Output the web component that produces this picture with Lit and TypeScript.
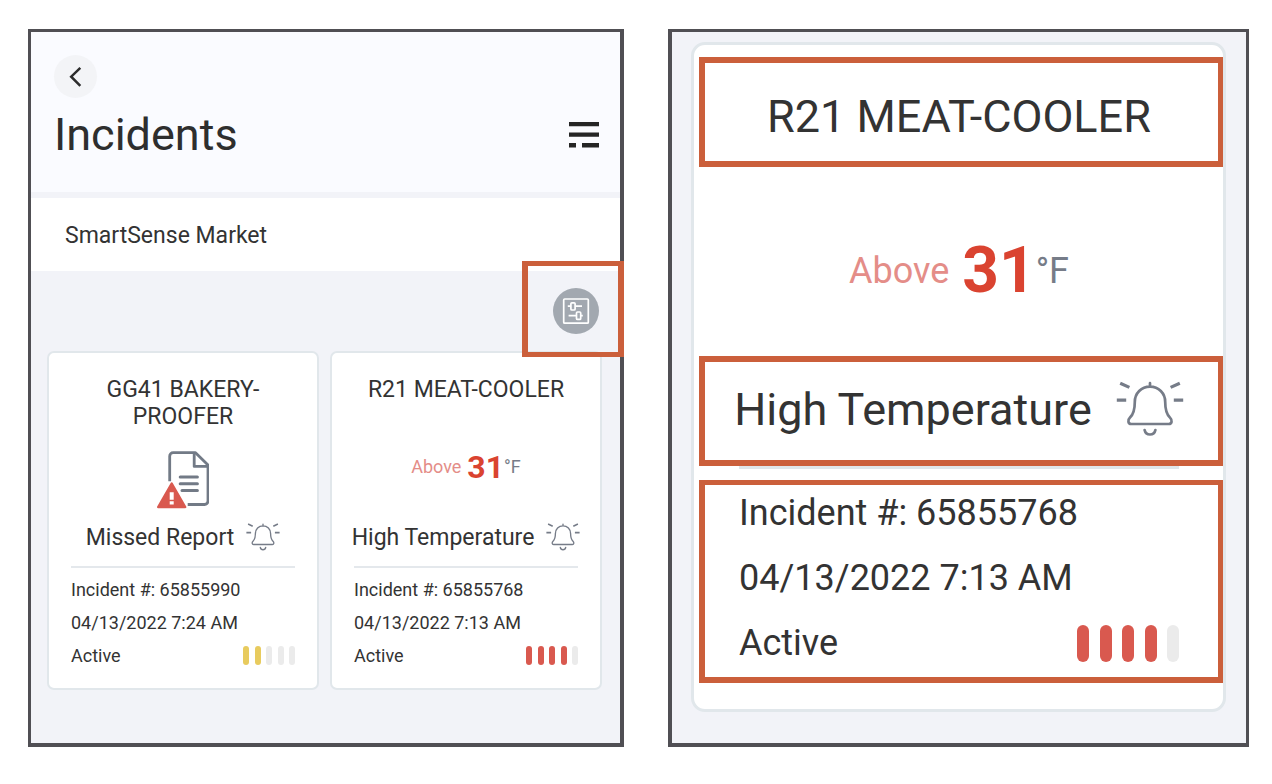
import { LitElement, html, css } from "lit";
import { customElement, property } from "lit/decorators.js";

interface Incident {
  title: string;
  kind: string;
  number: string;
  time: string;
  status: string;
  level: number;
  tone: "red" | "yellow";
  value?: string;
}

const bakery: Incident = {
  title: "GG41 BAKERY-PROOFER",
  kind: "Missed Report",
  number: "65855990",
  time: "04/13/2022 7:24 AM",
  status: "Active",
  level: 2,
  tone: "yellow",
};

const cooler: Incident = {
  title: "R21 MEAT-COOLER",
  kind: "High Temperature",
  number: "65855768",
  time: "04/13/2022 7:13 AM",
  status: "Active",
  level: 4,
  tone: "red",
  value: "31",
};

const bellIcon = html`<svg class="bell" viewBox="0 0 68 56" aria-hidden="true">
  <g fill="none" stroke="#767c88" stroke-width="2.7" stroke-linecap="round" stroke-linejoin="round">
    <path d="M34 2.2v3.2M34 5.6c-8.6 0-15.2 6.6-15.2 15.4 0 8.200-1.200 12.200-4.800 15.600-2.600 2.500-2 6.400 1.200 6.400h37.600c3.200 0 3.800-3.900 1.200-6.400-3.600-3.400-4.800-7.400-4.800-15.600 0-8.800-6.600-15.400-15.200-15.400z"/>
    <path d="M28.600 49c.6 2.900 2.700 4.500 5.400 4.500s4.800-1.600 5.400-4.500"/>
  </g>
  <g fill="none" stroke="#767c88" stroke-width="3.200">
    <path d="M.8 19.200h9.400M57.800 19.200h9.400M4.200 2.200l9.200 4.200M63.800 2.200l-9.200 4.200"/>
  </g>
</svg>`;

const reportIcon = html`<svg class="report" viewBox="0 0 52 58" role="img" aria-label="Missed report">
  <g fill="none" stroke="#727a86" stroke-width="2.800" stroke-linejoin="round">
    <path d="M12.700 30.300V5.200c0-2 1.500-3.500 3.500-3.500h22.300l12.500 12.300v36c0 2-1.500 3.500-3.500 3.500H30.700"/>
    <path d="M37.200 1.700v13.700h13.800"/>
    <path stroke-linecap="round" stroke-width="3" d="M23.200 25.900h17.200M23.200 32.700h17.200M25 39.400h15.400"/>
  </g>
  <path d="M14.700 32.600L28.200 56H1.200z" fill="#d9594f" stroke="#d9594f" stroke-width="2.400" stroke-linejoin="round"/>
  <path d="M12.700 41.300h4v7.400h-4zM12.700 50.300h4v3.200h-4z" fill="#fff"/>
</svg>`;

@customElement("incident-card")
export class IncidentCard extends LitElement {
  @property({ attribute: false }) incident!: Incident;
  @property({ type: Boolean, reflect: true }) large = false;

  static styles = css`
    :host {
      display: flex;
      flex-direction: column;
      box-sizing: border-box;
      min-width: 0;
      padding: 23px 22px 16px;
      border: 2px solid #e1e7eb;
      border-radius: 7px;
      background: #fff;
      color: #333;
      --title: 23px;
      --title-line: 27px;
      --detail: 18px;
      --detail-line: 33px;
      --value: 32px;
    }
    :host([large]) {
      padding: 45px 44px 33px 45px;
      border-width: 3px;
      border-radius: 14px;
      --title: 45px;
      --title-line: 54px;
      --detail: 36px;
      --detail-line: 65px;
      --value: 64px;
    }
    .title, .kind, .facts { position: relative; }
    .title {
      margin: 0;
      font-size: var(--title);
      font-weight: 400;
      line-height: var(--title-line);
      text-align: center;
    }
    .body {
      flex: 1;
      display: flex;
      align-items: center;
      justify-content: center;
      box-sizing: border-box;
      min-height: 90px;
      padding-top: 10px;
    }
    :host([large]) .body { min-height: 231px; padding-top: 22px; }
    .reading {
      display: flex;
      align-items: center;
      margin: 0;
      font-size: var(--detail);
      line-height: 1;
    }
    .above { margin-right: 6px; color: #e48d88; }
    :host([large]) .above { margin-right: 13px; }
    .value { color: #da4330; font-size: var(--value); font-weight: 700; }
    .unit { color: #767c88; }
    .report { width: 52px; height: 58px; }
    .kind {
      display: flex;
      align-items: center;
      justify-content: center;
      gap: 12px;
      height: 34px;
      font-size: var(--title);
      white-space: nowrap;
    }
    :host([large]) .kind { gap: 24px; height: 68px; }
    .bell { flex: none; width: 34px; height: 28px; }
    :host([large]) .bell { width: 68px; height: 56px; }
    .rule {
      width: 100%;
      height: 2px;
      margin: 12px 0 5px;
      border: 0;
      background: #e4e8ec;
    }
    :host([large]) .rule { height: 3px; margin: 23px 0 12px; background: #dfe6ea; }
    .facts { font-size: var(--detail); line-height: var(--detail-line); }
    .facts p { margin: 0; }
    .facts .status { display: flex; align-items: center; justify-content: space-between; }
    .meter { display: flex; justify-content: space-between; width: 52px; height: 19px; }
    .bar { width: 6px; border-radius: 3px; background: #ebebeb; }
    :host([large]) .meter { width: 102px; height: 37px; }
    :host([large]) .bar { width: 12px; border-radius: 6px; }
    .bar.red { background: #d9594f; }
    .bar.yellow { background: #e8cb5e; }
    :host([large]) .title::after,
    :host([large]) .kind::after,
    :host([large]) .facts::after {
      content: "";
      position: absolute;
      inset: -33px -44px -23px -40px;
      border: 6px solid #cb5f3b;
      border-right-width: 5px;
      pointer-events: none;
    }
    :host([large]) .kind::after { top: -19px; }
    :host([large]) .facts::after { top: -1px; bottom: -7px; border-top-width: 5px; }
  `;

  render() {
    const i = this.incident;
    return html`
      <h2 class="title">${i.title}</h2>
      <div class="body">
        ${i.value
          ? html`<p class="reading">
              <span class="above">Above</span><span class="value">${i.value}</span><span class="unit">°F</span>
            </p>`
          : reportIcon}
      </div>
      <div class="kind"><span>${i.kind}</span>${bellIcon}</div>
      <hr class="rule" />
      <div class="facts">
        <p>Incident #: ${i.number}</p>
        <p>${i.time}</p>
        <div class="status">
          <span>${i.status}</span>
          <span class="meter" role="img" aria-label="Severity ${i.level} of 5">
            ${[0, 1, 2, 3, 4].map((n) => html`<span class="bar ${n < i.level ? i.tone : ""}"></span>`)}
          </span>
        </div>
      </div>
    `;
  }
}

@customElement("app-root")
export class AppRoot extends LitElement {
  static styles = css`
    :host {
      display: grid;
      grid-template-columns: minmax(0, 596fr) minmax(0, 581fr);
      gap: 44px;
      align-items: stretch;
      box-sizing: border-box;
      min-height: 100vh;
      padding: 29px 23px 37px 28px;
      background: #fff;
      color: #333;
      font-family: Roboto, "Liberation Sans", sans-serif;
    }
    .panel {
      box-sizing: border-box;
      border: 4px solid #504f54;
      border-top-width: 3px;
      background: #f2f3f8;
    }
    .list { border-left-width: 3px; }
    .detail { border-right-width: 3px; padding: 10px 20px 31px 19px; }
    button {
      display: block;
      padding: 0;
      border: 0;
      background: none;
      cursor: pointer;
    }
    button svg { display: block; }
    .head {
      padding: 23px 21px 30px 23px;
      border-bottom: 6px solid #f2f3f8;
      background: #fafbff;
    }
    .back {
      width: 43px;
      height: 43px;
      border-radius: 50%;
      background: #f3f4f7;
    }
    .heading {
      display: flex;
      align-items: center;
      justify-content: space-between;
      margin-top: 10px;
    }
    h1 { margin: 0; font-size: 45px; font-weight: 400; line-height: 54px; color: #2e2e2e; }
    .site {
      margin: 0;
      padding: 2px 34px 0;
      background: #fff;
      font-size: 23px;
      line-height: 71px;
    }
    .tools { display: flex; justify-content: flex-end; padding: 17px 21px; }
    .marked { position: relative; z-index: 1; }
    .marked::after {
      content: "";
      position: absolute;
      inset: -27px -25px -23px -31px;
      border: 5px solid #cb5f3b;
      border-width: 5px 6px;
      pointer-events: none;
    }
    .filter { width: 46px; height: 46px; border-radius: 50%; background: #a2a8b0; }
    .cards {
      display: grid;
      grid-template-columns: repeat(2, minmax(0, 1fr));
      gap: 11px;
      padding: 0 18px 53px 16px;
    }
  `;

  render() {
    return html`
      <section class="panel list">
        <header class="head">
          <button class="back" aria-label="Back">
            <svg width="43" height="43" viewBox="0 0 43 43">
              <path d="M26.300 12.800L17.200 21.700l9.100 9.100" fill="none" stroke="#2c2c2c" stroke-width="2.500" />
            </svg>
          </button>
          <div class="heading">
            <h1>Incidents</h1>
            <button aria-label="Menu">
              <svg width="30" height="26" viewBox="0 0 30 26">
                <path d="M0 0h30v4.200H0zM0 10.600h30v4.200H0zM0 21h7v4.400H0zM13 21h17v4.400H13z" fill="#252525" />
              </svg>
            </button>
          </div>
        </header>
        <p class="site">SmartSense Market</p>
        <div class="tools">
          <div class="marked">
            <button class="filter" aria-label="Filter">
              <svg width="46" height="46" viewBox="0 0 46 46" fill="none" stroke="#fff" stroke-width="1.700">
                <rect x="10.700" y="11" width="24.600" height="24.200" rx="1" />
                <path d="M14.800 18.200h3M22.300 18.200h6.700M15.600 27.700h7.800M28 27.700h1.800" />
                <rect x="17.900" y="14.800" width="4.200" height="7.200" rx="1" />
                <rect x="23.500" y="24" width="4.200" height="7.400" rx="1" />
              </svg>
            </button>
          </div>
        </div>
        <div class="cards">
          <incident-card .incident=${bakery}></incident-card>
          <incident-card .incident=${cooler}></incident-card>
        </div>
      </section>
      <section class="panel detail">
        <incident-card large .incident=${cooler}></incident-card>
      </section>
    `;
  }
}
